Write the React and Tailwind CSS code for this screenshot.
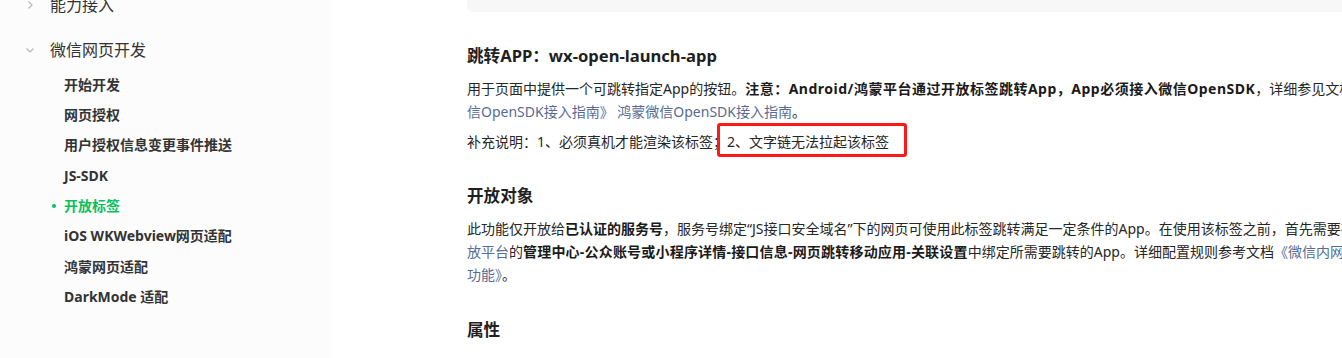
import React from "react";

const ChevronRight = () => (
  <svg width="10" height="10" viewBox="0 0 10 10" fill="none" className="shrink-0">
    <path d="M3.5 1.5 L7 5 L3.5 8.5" stroke="#b8b8b8" strokeWidth="1.2" />
  </svg>
);
const ChevronDown = () => (
  <svg width="10" height="10" viewBox="0 0 10 10" fill="none" className="shrink-0">
    <path d="M1.5 3.5 L5 7 L8.5 3.5" stroke="#b8b8b8" strokeWidth="1.2" />
  </svg>
);

const subItems = [
  "开始开发",
  "网页授权",
  "用户授权信息变更事件推送",
  "JS-SDK",
  "开放标签",
  "iOS WKWebview网页适配",
  "鸿蒙网页适配",
  "DarkMode 适配",
];

function Link({ children }) {
  return <span className="text-[#576b95]">{children}</span>;
}

export default function App() {
  return (
    <div className="w-[1342px] h-[358px] overflow-hidden flex bg-white font-[family-name:'Noto_Sans','Noto_Sans_CJK_SC',sans-serif] text-[#262626]">
      <aside className="w-[330px] shrink-0 h-full bg-[#fcfcfc]">
        <div className="-mt-[18px]">
          <div className="h-[46px] flex items-center pl-[25px] gap-[15px] text-[16px] text-[#333]">
            <ChevronRight />
            <span>能力接入</span>
          </div>
          <div className="h-[44px] flex items-center pl-[25px] gap-[15px] text-[16px] text-[#333]">
            <ChevronDown />
            <span>微信网页开发</span>
          </div>
          <ul className="-mt-[3px]">
            {subItems.map((t) => {
              const active = t === "开放标签";
              return (
                <li
                  key={t}
                  className={
                    "h-[30.36px] flex items-center pl-[64px] relative text-[14px] font-bold whitespace-nowrap " +
                    (active ? "text-[#07c160]" : "text-[#333]")
                  }
                >
                  {active && (
                    <span className="absolute left-[52px] top-1/2 -translate-y-1/2 w-[4px] h-[4px] rounded-full bg-[#07c160]" />
                  )}
                  {t}
                </li>
              );
            })}
          </ul>
        </div>
      </aside>

      <main className="flex-1 min-w-0 pl-[137px] whitespace-nowrap">
        <div className="h-[12px] w-[1200px] bg-[#f7f7f7] rounded-bl-[5px]" />

        <h2 className="mt-[32px] text-[16.6px] leading-[24px] font-bold text-[#1f1f1f]">
          跳转APP：wx-open-launch-app
        </h2>

        <div className="mt-[9px] text-[14px] leading-[23px]">
          <div>
            用于页面中提供一个可跳转指定App的按钮。
            <b className="font-bold text-[#1a1a1a] tracking-[0.5px]">
              注意：Android/鸿蒙平台通过开放标签跳转App，App必须接入微信OpenSDK
            </b>
            ，详细参见文档<Link>《微信OpenSDK接入指南》</Link>
          </div>
          <div>
            <Link>信OpenSDK接入指南》 鸿蒙微信OpenSDK接入指南</Link>。
          </div>
        </div>

        <div className="mt-[6.5px] text-[14px] leading-[23px]">
          补充说明：1、必须真机才能渲染该标签；
          <span className="relative inline-block">
            2、文字链无法拉起该标签
            <span className="absolute left-[-10px] right-[-18px] top-[-7px] bottom-[-4px] border-[3px] border-[#ff1a1a] rounded-[3px]" />
          </span>
        </div>

        <h2 className="mt-[31.5px] text-[16.6px] leading-[24px] font-bold text-[#1f1f1f]">
          开放对象
        </h2>

        <div className="mt-[8.5px] text-[14px] leading-[23px]">
          <div>
            此功能仅开放给<b className="font-bold text-[#1a1a1a]">已认证的服务号</b>
            ，服务号绑定“JS接口安全域名”下的网页可使用此标签跳转满足一定条件的App。在使用该标签之前，首先需要在微信开
          </div>
          <div>
            <Link>放平台</Link>的
            <b className="font-bold text-[#1a1a1a] tracking-[0.2px]">
              管理中心-公众账号或小程序详情-接口信息-网页跳转移动应用-关联设置
            </b>
            中绑定所需要跳转的App。详细配置规则参考文档<Link>《微信内网页跳转App</Link>
          </div>
          <div>
            <Link>功能》</Link>。
          </div>
        </div>

        <h2 className="mt-[32px] text-[16.6px] leading-[24px] font-bold text-[#1f1f1f]">
          属性
        </h2>
      </main>
    </div>
  );
}
